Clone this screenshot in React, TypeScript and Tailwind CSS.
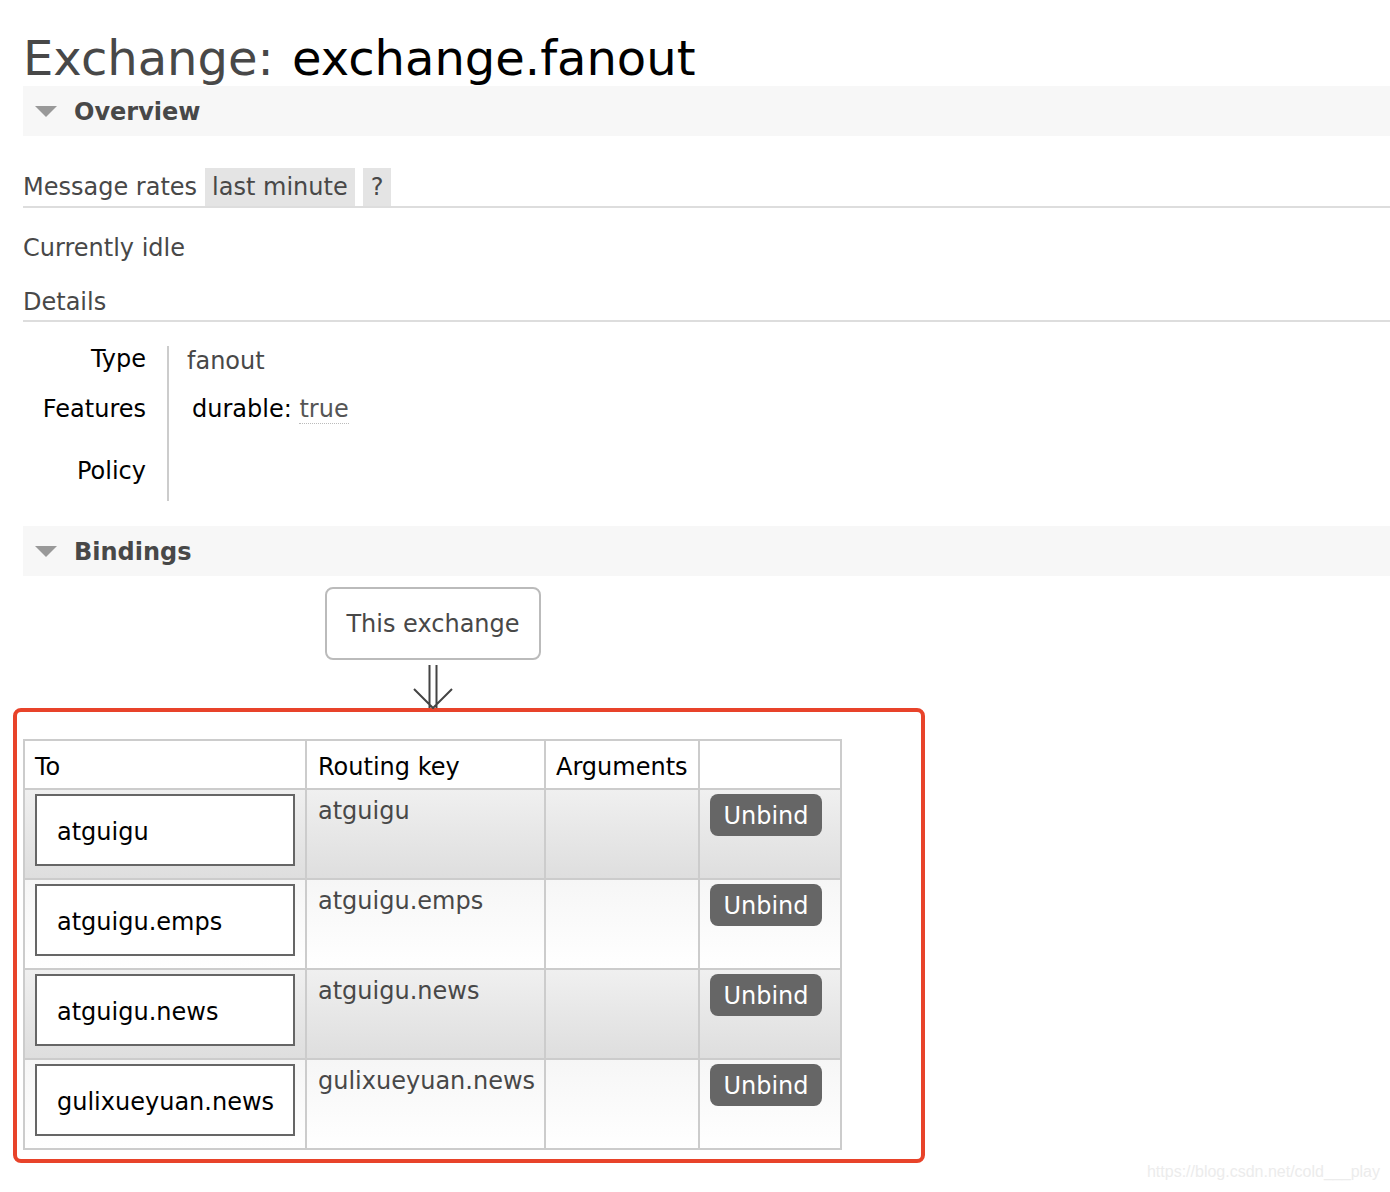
const rows = [
  { to: 'atguigu', key: 'atguigu' },
  { to: 'atguigu.emps', key: 'atguigu.emps' },
  { to: 'atguigu.news', key: 'atguigu.news' },
  { to: 'gulixueyuan.news', key: 'gulixueyuan.news' },
];

function SectionBar({ title }: { title: string }) {
  return (
    <div className="flex h-[50px] items-center bg-[#f7f7f7]">
      <span className="ml-[12px] h-0 w-0 border-x-[11px] border-t-[11px] border-x-transparent border-t-[#999]" />
      <span className="ml-[17px] pt-[2px] text-[24px] font-bold text-[#484848]">{title}</span>
    </div>
  );
}

export default function App() {
  return (
    <div
      className="relative min-h-[1192px] w-[1390px] overflow-hidden bg-white pl-[23px]"
      style={{ fontFamily: '"DejaVu Sans", Verdana, sans-serif' }}
    >
      <h1 className="pt-[30px] text-[48px] leading-[56px] text-[#484848]">
        Exchange: <span className="ml-[3px] text-black">exchange.fanout</span>
      </h1>

      <SectionBar title="Overview" />

      <div className="mt-[32px] flex h-[40px] items-stretch border-b-2 border-[#ddd] text-[24px] text-[#484848]">
        <span className="flex items-center pr-[8px]">Message rates</span>
        <span className="flex items-center bg-[#e4e4e4] px-[7px]">last minute</span>
        <span className="ml-[8px] flex items-center bg-[#e4e4e4] px-[8px]">?</span>
      </div>

      <p className="mt-[22px] text-[24px] leading-[36px] text-[#484848]">Currently idle</p>

      <div className="mt-[18px] border-b-2 border-[#ddd] text-[24px] leading-[36px] text-[#484848]">
        Details
      </div>

      <div className="mt-[24px] flex text-[24px]">
        <div className="flex w-[123px] flex-col items-end text-black">
          <span className="leading-[26px]">Type</span>
          <span className="mt-[24px] leading-[26px]">Features</span>
          <span className="mt-[36px] leading-[26px]">Policy</span>
        </div>
        <div className="ml-[21px] h-[155px] w-[2px] bg-[#ccc]" />
        <div className="ml-[18px] flex flex-col">
          <span className="mt-[2px] leading-[26px] text-[#484848]">fanout</span>
          <span className="mt-[22px] ml-[5px] leading-[26px] text-black">
            durable:{' '}
            <span className="border-b border-dotted border-[#bbb] text-[#555]">true</span>
          </span>
        </div>
      </div>

      <div className="mt-[25px]">
        <SectionBar title="Bindings" />
      </div>

      <div className="ml-[302px] mt-[11px] flex w-[216px] flex-col items-center">
        <div className="flex h-[73px] w-[216px] items-center justify-center rounded-[8px] border-2 border-[#bbb] text-[24px] text-[#484848]">
          This exchange
        </div>
        <svg width="44" height="44" viewBox="0 0 44 44" className="mt-[5px]">
          <path d="M18.5 0 V43 M25.5 0 V43 M3 24 L22 43 L41 24" fill="none" stroke="#444" strokeWidth="2" />
        </svg>
      </div>

      <div className="-ml-[10px] mt-[-1px] w-[912px] rounded-[8px] border-[4px] border-[#e8432a] pb-[9px] pl-[6px] pt-[27px]">
        <table className="border-collapse text-[24px]">
          <thead>
            <tr className="h-[49px] text-left text-black">
              <th className="w-[282px] border-2 border-[#ccc] pl-[10px] pt-[4px] font-normal">To</th>
              <th className="w-[239px] border-2 border-[#ccc] pl-[11px] pt-[4px] font-normal">Routing key</th>
              <th className="w-[154px] border-2 border-[#ccc] pl-[10px] pt-[4px] font-normal">Arguments</th>
              <th className="w-[142px] border-2 border-[#ccc] font-normal" />
            </tr>
          </thead>
          <tbody>
            {rows.map((r, i) => (
              <tr
                key={r.to}
                className={
                  i % 2 === 0
                    ? 'bg-gradient-to-b from-[#f0f0f0] to-[#dedede]'
                    : 'bg-gradient-to-b from-[#f6f6f6] to-[#ffffff]'
                }
              >
                <td className="border-2 border-[#ccc] px-[10px] pb-[12px] pt-[4px] align-top">
                  <div className="flex h-[72px] items-center border-2 border-[#666] bg-white pl-[20px] pt-[3px] text-black">
                    {r.to}
                  </div>
                </td>
                <td className="border-2 border-[#ccc] pl-[11px] pt-[6px] align-top leading-[30px] text-[#484848]">
                  {r.key}
                </td>
                <td className="border-2 border-[#ccc]" />
                <td className="border-2 border-[#ccc] pl-[10px] pt-[4px] align-top">
                  <div className="flex h-[42px] w-[112px] items-center justify-center rounded-[8px] bg-[#666] pt-[1px] text-white">
                    Unbind
                  </div>
                </td>
              </tr>
            ))}
          </tbody>
        </table>
      </div>

      <div
        className="absolute bottom-[8px] right-[10px] text-[16px] text-[#ececec]"
        style={{ fontFamily: '"Liberation Sans", Arial, sans-serif' }}
      >
        https://blog.csdn.net/cold___play
      </div>
    </div>
  );
}
